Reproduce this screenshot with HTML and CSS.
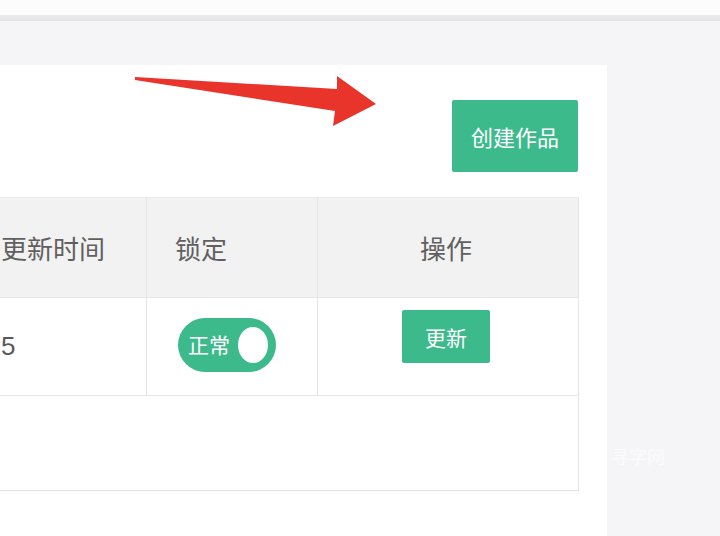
FILE: index.html
```html
<!DOCTYPE html>
<html lang="zh-CN">
<head>
<meta charset="utf-8">
<title>作品列表</title>
<link rel="stylesheet" href="styles.css">
</head>
<body>
<div class="topbar"></div>
<div class="topline"></div>
<div class="main">
  <section class="card">
    <svg class="arrow" width="245" height="54" viewBox="0 0 245 54" aria-hidden="true">
      <polygon points="0,2 202,14 202,1 241,29 198,51 200,36 0,5" fill="#e8342b"/>
    </svg>
    <div class="card-head">
      <button class="btn btn-create">创建作品</button>
    </div>
    <table class="grid">
      <thead>
        <tr>
          <th class="col-time">更新时间</th>
          <th class="col-lock">锁定</th>
          <th class="col-op">操作</th>
        </tr>
      </thead>
      <tbody>
        <tr class="row">
          <td class="cell-time">5</td>
          <td class="cell-lock">
            <span class="toggle"><span class="toggle-text">正常</span><span class="knob"></span></span>
          </td>
          <td class="cell-op"><button class="btn btn-update">更新</button></td>
        </tr>
        <tr class="row-empty">
          <td colspan="3"></td>
        </tr>
      </tbody>
    </table>
  </section>
  <aside class="side">
    <span class="watermark">寻字网</span>
  </aside>
</div>
</body>
</html>
```

FILE: styles.css
```css
* { box-sizing: border-box; }

html, body {
  margin: 0;
  padding: 0;
  height: 100%;
  overflow: hidden;
}

body {
  background: #f5f5f8;
  font-family: "Noto Sans CJK SC", "Liberation Sans", sans-serif;
  color: #555;
}

.topbar {
  height: 15px;
  background: #fcfcfd;
}

.topline {
  height: 6px;
  background: linear-gradient(#ebebee, #e3e3e6);
}

.main {
  display: flex;
  padding-top: 44px;
  height: 515px;
}

.card {
  position: relative;
  width: 607px;
  flex: none;
  background: #ffffff;
  padding: 35px 28px 0 0;
}

.arrow {
  position: absolute;
  left: 135px;
  top: 10px;
}

.card-head {
  display: flex;
  justify-content: flex-end;
  margin-bottom: 25px;
}

.btn {
  border: none;
  background: #3dba8c;
  color: #ffffff;
  font-family: "Noto Sans CJK SC", sans-serif;
  padding: 0;
  border-radius: 2px;
}

.btn-create {
  width: 126px;
  height: 72px;
  font-size: 22px;
  margin-right: 1px;
}

.grid {
  margin-left: -28px;
  width: 607px;
  border-collapse: collapse;
  table-layout: fixed;
  border-right: 1px solid #e4e4e4;
  border-bottom: 1px solid #e4e4e4;
}

.grid th {
  background: #f2f2f2;
  height: 100px;
  font-weight: 400;
  font-size: 26px;
  color: #606060;
  text-align: left;
  padding: 0 0 0 28px;
  border-top: 1px solid #ececec;
  border-left: 1px solid #e4e4e4;
}

.col-time { width: 174px; }
.col-lock { width: 171px; }
.grid th.col-op { text-align: center; padding: 0 4px 0 0; }

.row td {
  height: 98px;
  border-top: 1px solid #e6e6e6;
  border-left: 1px solid #e6e6e6;
  padding: 0 0 0 28px;
}

.cell-time {
  font-family: "Liberation Sans", sans-serif;
  font-size: 26px;
  color: #5a5a5a;
}

.cell-lock { vertical-align: middle; }

.toggle {
  display: inline-flex;
  align-items: center;
  justify-content: space-between;
  width: 98px;
  height: 54px;
  margin-left: 3px;
  margin-top: -4px;
  border-radius: 27px;
  background: #3dba8c;
  padding: 0 8px 0 10px;
}

.toggle-text {
  color: #ffffff;
  font-size: 21px;
  line-height: 1;
}

.knob {
  width: 30px;
  height: 36px;
  border-radius: 50%;
  background: #ffffff;
}

.grid td.cell-op {
  text-align: center;
  vertical-align: top;
  padding: 12px 4px 0 0;
}

.btn-update {
  width: 88px;
  height: 53px;
  font-size: 21px;
}

.row-empty td {
  height: 95px;
  border-top: 1px solid #e6e6e6;
}

.side {
  flex: 1;
  position: relative;
}

.watermark {
  position: absolute;
  left: 4px;
  top: 378px;
  font-size: 18px;
  color: #ffffff;
  opacity: 0.6;
}
```
